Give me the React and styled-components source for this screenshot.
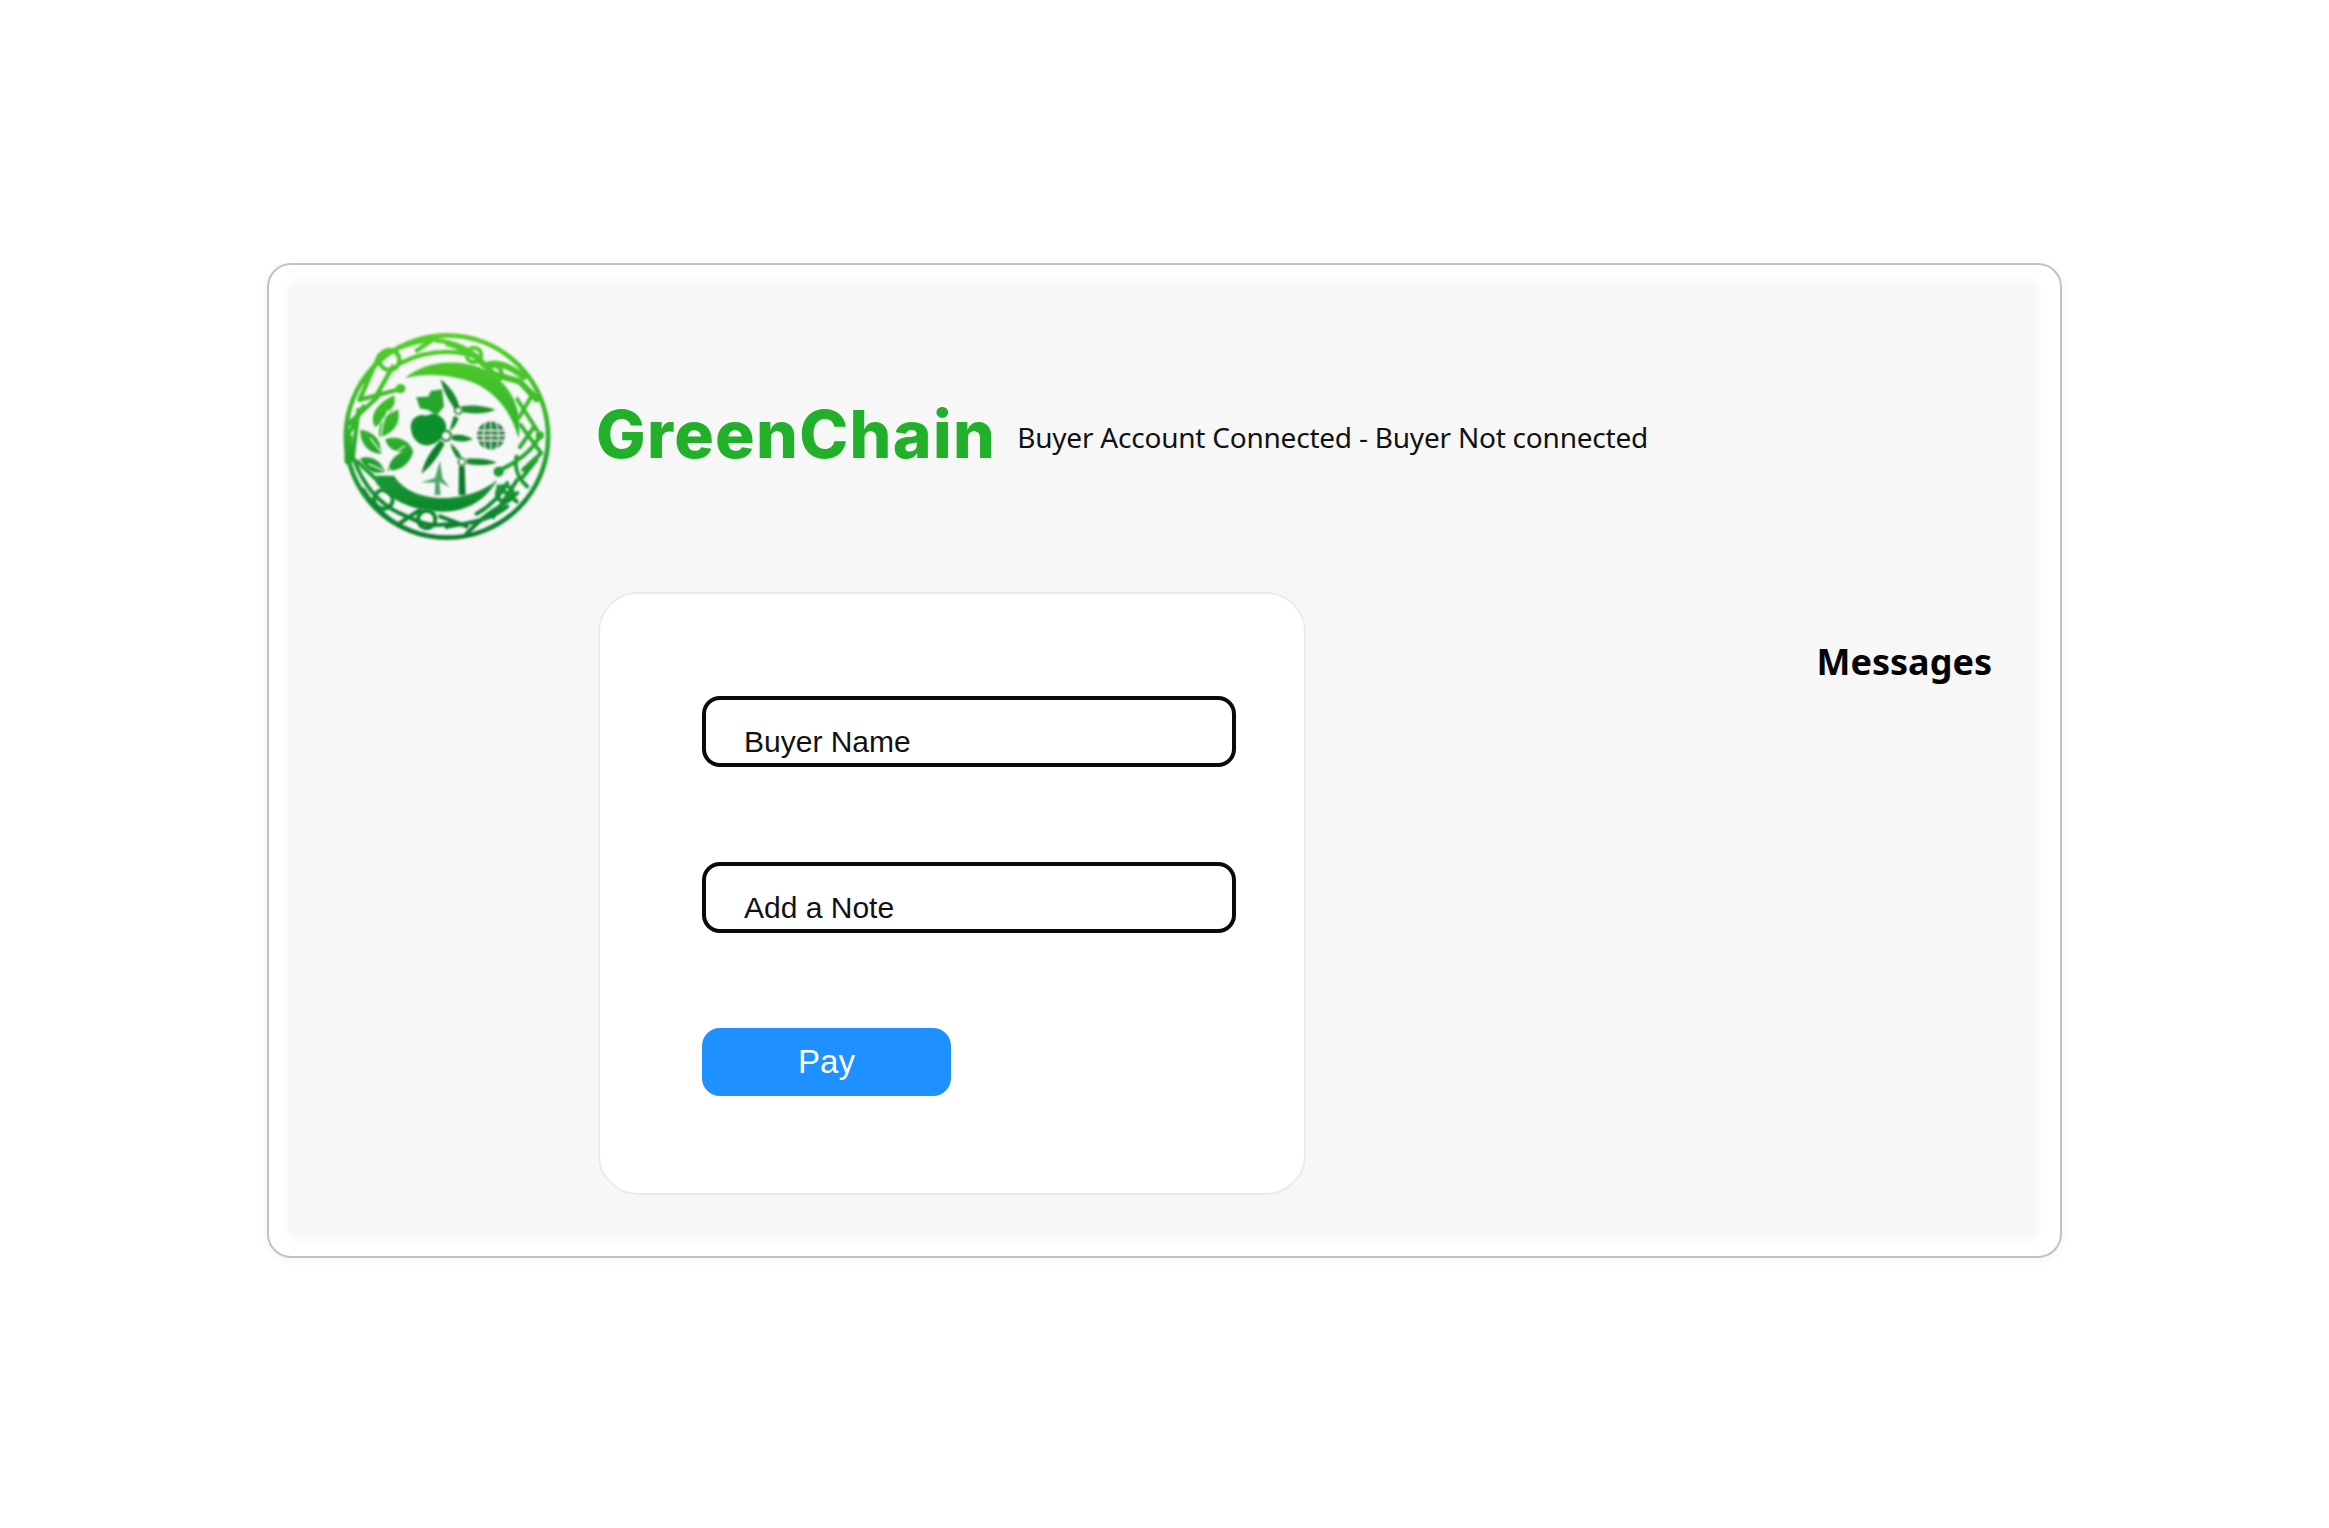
import styled, { createGlobalStyle } from "styled-components";

const GlobalStyle = createGlobalStyle`
  html, body {
    margin: 0;
    padding: 0;
    background: #ffffff;
  }
`;

const Page = styled.div`
  box-sizing: border-box;
  min-height: 1528px;
  padding-top: 263px;
  display: flex;
  justify-content: center;
  align-items: flex-start;
`;

const Frame = styled.div`
  box-sizing: border-box;
  width: 1795px;
  height: 995px;
  padding: 17px 24px 18px 20px;
  border: 2px solid #c2c2c2;
  border-radius: 24px;
  box-shadow: 0 2px 10px rgba(0, 0, 0, 0.05);
`;

const Panel = styled.div`
  box-sizing: border-box;
  height: 100%;
  padding: 48px 44px 0 51px;
  background: #f7f7f7;
  border-radius: 10px;
  box-shadow: 0 0 8px 2px #f7f7f7;
`;

const Header = styled.header`
  display: flex;
  align-items: center;
  height: 213px;
`;

const LogoMark = styled.svg`
  display: block;
  width: 215px;
  height: 213px;
  flex: none;
`;

const Brand = styled.span`
  margin: -5px 0 0 41px;
  font-family: "Inter", "Open Sans", sans-serif;
  font-size: 66px;
  font-weight: 800;
  line-height: 1;
  letter-spacing: 1.3px;
  color: #22b02a;
`;

const Status = styled.span`
  margin-left: 21px;
  font-family: "Noto Sans", "Open Sans", sans-serif;
  font-size: 28px;
  letter-spacing: -0.22px;
  color: #111111;
`;

const Body = styled.main`
  display: flex;
  justify-content: space-between;
  align-items: flex-start;
  margin-top: 49px;
  padding-left: 258px;
`;

const Card = styled.form`
  box-sizing: border-box;
  width: 708px;
  height: 603px;
  padding: 102px 0 0 102px;
  display: flex;
  flex-direction: column;
  align-items: flex-start;
  gap: 95px;
  background: #ffffff;
  border: 2px solid #ebebeb;
  border-radius: 40px;
`;

const Field = styled.input`
  box-sizing: border-box;
  width: 534px;
  height: 71px;
  padding: 20px 0 0 38px;
  background: #ffffff;
  border: 4px solid #0a0a0a;
  border-radius: 18px;
  outline: none;
  font-family: "Liberation Sans", Arial, sans-serif;
  font-size: 30px;
  color: #111111;

  &::placeholder {
    color: #111111;
    opacity: 1;
  }
`;

const PayButton = styled.button`
  width: 249px;
  height: 68px;
  padding-bottom: 2px;
  background: #1e90ff;
  border: none;
  border-radius: 18px;
  font-family: "Liberation Sans", Arial, sans-serif;
  font-size: 33px;
  color: #ffffff;
`;

const MessagesTitle = styled.h2`
  margin: 47px 0 0;
  font-family: "Noto Sans", "Open Sans", sans-serif;
  font-size: 36px;
  font-weight: 700;
  line-height: 1.3;
  color: #050505;
`;

const Logo = () => (
  <LogoMark viewBox="60 60 645 640" aria-label="GreenChain logo">
    <defs>
      <linearGradient
        id="leafGreen"
        gradientUnits="userSpaceOnUse"
        x1="0"
        y1="70"
        x2="0"
        y2="690"
      >
        <stop offset="0" stopColor="#56d02c" />
        <stop offset="0.45" stopColor="#35b62c" />
        <stop offset="0.75" stopColor="#149230" />
        <stop offset="1" stopColor="#0a7c2e" />
      </linearGradient>
      <filter id="soft">
        <feGaussianBlur stdDeviation="2.6" />
      </filter>
    </defs>

    {/* ring and knot work */}
    <g
      filter="url(#soft)"
      fill="none"
      stroke="url(#leafGreen)"
      strokeLinecap="round"
      strokeLinejoin="round"
    >
      <circle cx="381" cy="380" r="304" strokeWidth="14" />
      <g strokeWidth="13">
        <path d="M240 160 C300 130 380 112 470 140" />
        <path d="M130 215 C170 135 250 95 350 88" />
        <path d="M178 135 L118 270 M218 170 L172 252 M118 270 L238 238" />
        <path d="M82 345 L172 262 M290 122 L345 85 M350 92 C385 92 405 105 425 122" />
        <circle cx="208" cy="150" r="30" />
        <path d="M115 300 L98 440 M78 385 L130 290" />
      </g>
      <g strokeWidth="19">
        <path d="M384 100 C420 108 445 122 470 142 L520 192 L600 215 L650 268" />
        <path d="M500 165 C540 150 580 178 612 200" />
      </g>
      <g strokeWidth="12">
        <circle cx="462" cy="135" r="22" />
        <circle cx="522" cy="192" r="24" />
        <path d="M592 268 L652 362 M640 250 L598 322 M602 345 L664 430 M642 352 L600 412" />
        <path d="M610 480 L662 432 M590 440 C580 490 610 520 622 530 M650 450 L610 500" />
        <path d="M534 484 C590 460 640 420 660 378" />
        <path d="M470 612 C510 590 540 560 562 520 M440 672 C470 640 500 612 540 590 L592 550" />
        <path d="M380 652 C430 640 500 640 562 590 M520 622 L592 510 M535 530 L590 575" />
        <path d="M100 445 C130 530 180 590 260 620 C320 650 350 650 410 640" />
        <path d="M130 540 C180 620 250 670 350 682" />
        <path d="M240 640 L300 600 M360 620 L440 650" />
        <circle cx="190" cy="569" r="28" />
        <circle cx="320" cy="629" r="26" />
        <circle cx="555" cy="552" r="24" />
      </g>
      <path d="M85 385 L85 452" strokeWidth="24" />
      <path d="M112 455 L170 510" strokeWidth="12" />
    </g>

    {/* crescents, leaves, trees and turbines */}
    <g filter="url(#soft)" fill="url(#leafGreen)">
      <circle cx="242" cy="236" r="14" />
      <circle cx="536" cy="486" r="15" />
      <circle cx="660" cy="376" r="12" />
      <path d="M255 205 C310 155 400 145 480 172 C565 210 612 290 596 385 C575 310 535 255 470 222 C395 192 315 188 255 205 Z" />
      <path d="M168 498 L222 498 C250 545 310 565 370 565 C430 565 490 545 532 510 C500 570 440 606 370 606 C280 606 205 570 168 520 Z" />
      <path d="M222 256 C232 290 205 325 165 352 C145 318 170 280 222 256 Z" />
      <path d="M234 298 C244 342 218 372 178 382 C170 342 195 316 234 298 Z" />
      <path d="M120 360 C165 366 184 395 184 432 C145 432 120 402 120 360 Z" />
      <path d="M195 388 C235 376 265 392 278 420 C240 434 205 424 195 388 Z" />
      <path d="M202 482 C212 440 245 418 280 422 C274 458 242 486 202 482 Z" />
      <path d="M120 445 C155 436 182 452 194 486 C160 496 132 480 120 445 Z" />
      <path fill="#0f8f2a" d="M272 350 C272 325 298 308 320 318 C342 303 372 318 378 345 C382 368 362 398 335 404 C303 416 272 388 272 350 Z" />
      <path fill="#28a52e" d="M288 262 L325 260 L332 243 L366 238 L372 290 L350 318 L325 300 L300 296 Z" />
      <path fill="#12882c" d="M362 208 C396 235 417 270 418 298 L405 298 C385 270 368 240 362 208 Z" />
      <path fill="#1a912c" d="M425 289 C460 284 500 289 526 300 C495 313 455 313 425 306 Z" />
      <path fill="#12882c" d="M402 318 L416 325 C409 345 399 358 388 364 Z" />
      <path fill="#12882c" d="M395 377 C420 371 440 377 459 388 C435 397 412 397 395 389 Z" />
      <path fill="#0f7f2c" d="M361 392 L374 401 C356 441 331 471 304 492 C314 450 334 420 361 392 Z" />
      <path fill="#12882c" d="M392 400 C410 415 421 430 425 445 L412 445 C400 430 393 415 392 400 Z" />
      <path fill="#12882c" d="M440 447 C470 444 505 447 531 458 C500 469 465 467 440 461 Z" />
      <path fill="#0e7a2c" d="M417 468 L434 468 L437 556 L416 556 Z" />
      <path fill="#4da66b" d="M360 452 L367 505 L388 532 L358 516 L362 556 L344 556 L346 518 L303 518 L345 505 Z" />
    </g>

    {/* hubs, leaf veins and the globe */}
    <g filter="url(#soft)" fill="none">
      <path
        d="M215 490 C178 430 172 360 205 300 M150 385 L182 425 M255 408 L200 445 M145 462 L190 482 M222 290 L180 340"
        stroke="#f7f7f7"
        strokeWidth="4"
      />
      <circle cx="378" cy="378" r="14" stroke="#12882c" strokeWidth="8" fill="#ffffff" />
      <circle cx="415" cy="302" r="10" stroke="#12882c" strokeWidth="6" fill="#ffffff" />
      <circle cx="426" cy="456" r="10" stroke="#12882c" strokeWidth="6" fill="#ffffff" />
      <circle cx="513" cy="377" r="42" fill="#14883a" />
      <path
        d="M471 362 H555 M471 377 H555 M471 392 H555 M498 336 C488 360 488 395 498 418 M513 335 V419 M528 336 C538 360 538 395 528 418"
        stroke="#f7f7f7"
        strokeWidth="3"
      />
    </g>
  </LogoMark>
);

export default function App() {
  return (
    <Page>
      <GlobalStyle />
      <Frame>
        <Panel>
          <Header>
            <Logo />
            <Brand>GreenChain</Brand>
            <Status>Buyer Account Connected - Buyer Not connected</Status>
          </Header>
          <Body>
            <Card>
              <Field placeholder="Buyer Name" />
              <Field placeholder="Add a Note" />
              <PayButton type="button">Pay</PayButton>
            </Card>
            <MessagesTitle>Messages</MessagesTitle>
          </Body>
        </Panel>
      </Frame>
    </Page>
  );
}
